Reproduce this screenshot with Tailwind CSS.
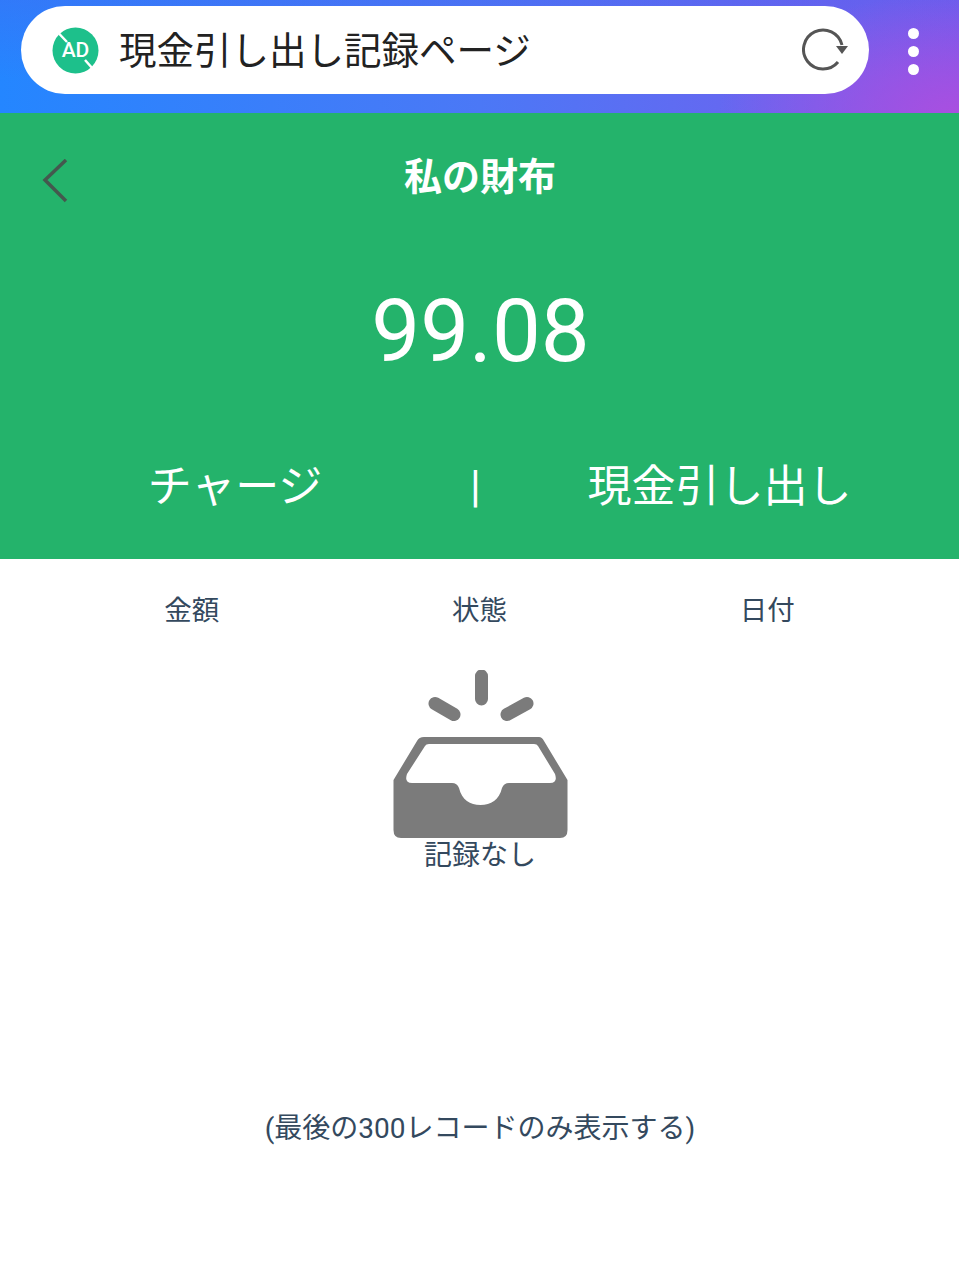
<!DOCTYPE html>
<html lang="ja">
<head>
<meta charset="utf-8">
<script src="https://cdn.jsdelivr.net/npm/@tailwindcss/browser@4"></script>
</head>
<body class="bg-white font-['Roboto','Noto_Sans_CJK_JP',sans-serif]">
<div class="w-[959px] h-[1281px] overflow-hidden flex flex-col bg-white">
  <header class="h-[113px] shrink-0 flex items-start pt-[6px] pl-[21px] bg-[radial-gradient(240px_120px_at_100%_100%,#a94fe0_0%,#a94fe000_100%),linear-gradient(180deg,#4a62ee55_0%,#4a62ee00_70%),linear-gradient(90deg,#2486ff_0%,#4b78f6_50%,#7c5aec_100%)]">
    <div class="w-[848px] h-[88px] rounded-[44px] bg-white flex items-center pl-[31px] pr-[21px]">
      <svg class="w-[47px] h-[47px] shrink-0" viewBox="0 0 47 47">
        <circle cx="23.5" cy="23.5" r="23" fill="#1dc08b"/>
        <path d="M6 5.500L15 15M33 33L41 42" stroke="#fff" stroke-width="2.500"/>
        <text x="23.5" y="30" text-anchor="middle" font-size="21" font-weight="500" fill="#fff" font-family="Roboto">AD</text>
      </svg>
      <div class="ml-[20px] pt-[2px] text-[37.5px] leading-[44px] text-[#222] flex-1 whitespace-nowrap">現金引し出し記録ページ</div>
      <svg class="w-[46px] h-[46px] shrink-0" viewBox="0 0 46 46" fill="none">
        <path d="M36 35A19.500 19.500 0 1 1 40 18" stroke="#555" stroke-width="3"/>
        <path d="M34 19H46L40 27Z" fill="#555"/>
      </svg>
    </div>
    <div class="ml-[39px] mt-[22px] flex flex-col gap-[7px]">
      <span class="w-[11px] h-[11px] rounded-full bg-white"></span>
      <span class="w-[11px] h-[11px] rounded-full bg-white"></span>
      <span class="w-[11px] h-[11px] rounded-full bg-white"></span>
    </div>
  </header>
  <section class="h-[446px] shrink-0 bg-[#24b36b] relative flex flex-col items-center text-white">
    <svg class="absolute left-[42px] top-[46px] w-[26px] h-[44px]" viewBox="0 0 26 44" fill="none">
      <path d="M24 1L3 21L24 42" stroke="#44584e" stroke-width="3.500"/>
    </svg>
    <h1 class="mt-[40px] pl-[1px] text-[38px] leading-[48px] font-bold">私の財布</h1>
    <div class="mt-[80px] pl-[2px] text-[87px] leading-[100px]">99.08</div>
    <div class="mt-[78px] w-full flex items-center text-[44px] leading-[56px]">
      <div class="w-[470px] text-center whitespace-nowrap">チャージ</div>
      <div class="w-[10px] text-center text-[44px]">|</div>
      <div class="flex-1 text-center whitespace-nowrap">現金引し出し</div>
    </div>
  </section>
  <main class="flex-1 flex flex-col items-center text-[28px] leading-[36px] text-[#34495e]">
    <div class="w-full mt-[34px] px-[48px] grid grid-cols-3 text-center text-[27.5px]">
      <div>金額</div><div>状態</div><div>日付</div>
    </div>
    <svg class="mt-[41px] w-[176px] h-[170px]" viewBox="0 0 176 170" fill="#7b7b7b">
      <path d="M89.500 6V29M43 33.500L62 44.500M115 44.500L135 33.500" stroke="#7b7b7b" stroke-width="13" stroke-linecap="round"/>
      <path fill-rule="evenodd" d="M32 67H147Q150 67 152 71L175.500 110V160Q175.500 168 168 168H9Q1.500 168 1.500 160V110L25 71Q27 67 32 67ZM37 74Q34 74 33 76L15 104Q12 113 20 113H60Q65 113 67 118C70 130 78 135 88.500 135C99 135 107 130 110 118Q112 113 117 113H158Q166 113 163 104L146 76Q145 74 142 74Z"/>
    </svg>
    <div class="-mt-[2px] pl-[1px]">記録なし</div>
    <div class="mt-[237px] pl-[1px]">(最後の300レコードのみ表示する)</div>
  </main>
</div>
</body>
</html>
